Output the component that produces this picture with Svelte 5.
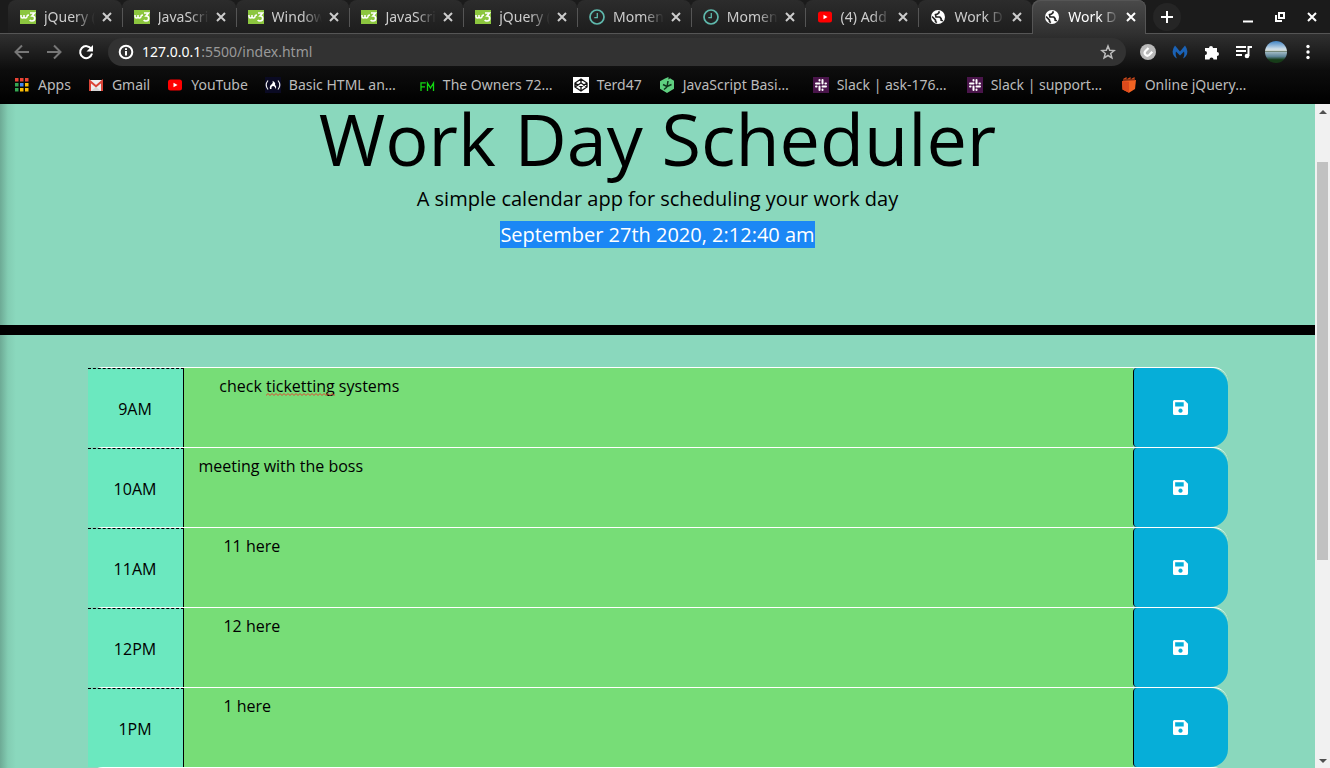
<script>
  const tabs = [
    { icon: 'w3', title: 'jQuery (' },
    { icon: 'w3', title: 'JavaScri' },
    { icon: 'w3', title: 'Window' },
    { icon: 'w3', title: 'JavaScri' },
    { icon: 'w3', title: 'jQuery (' },
    { icon: 'clock', title: 'Momen' },
    { icon: 'clock', title: 'Momen' },
    { icon: 'youtube', title: '(4) Add' },
    { icon: 'globe', title: 'Work D' },
    { icon: 'globe', title: 'Work D', active: true }
  ];
  const bookmarks = [
    { icon: 'apps', title: 'Apps' },
    { icon: 'gmail', title: 'Gmail' },
    { icon: 'youtube', title: 'YouTube' },
    { icon: 'fcc', title: 'Basic HTML an…', long: true },
    { icon: 'fm', title: 'The Owners 72…', long: true },
    { icon: 'codepen', title: 'Terd47' },
    { icon: 'treehouse', title: 'JavaScript Basi…', long: true },
    { icon: 'slack', title: 'Slack | ask-176…', long: true },
    { icon: 'slack', title: 'Slack | support…', long: true },
    { icon: 'box', title: 'Online jQuery…', long: true }
  ];
  let slots = $state([
    { hour: '9AM', text: '     check ticketting systems', typo: { left: 82, width: 69 } },
    { hour: '10AM', text: 'meeting with the boss' },
    { hour: '11AM', text: '      11 here' },
    { hour: '12PM', text: '      12 here' },
    { hour: '1PM', text: '      1 here' }
  ]);
</script>

{#snippet icon(name)}
  <svg class="icon" viewBox="0 0 16 16" aria-hidden="true">
    {#if name === 'w3'}
      <rect y="1" width="16" height="14" fill="#8cc63f" />
      <path d="M1 6v1.500a1.500 1.500 0 0 0 3 0V6v1.500a1.500 1.500 0 0 0 3 0q0-1.500 2-1.500" fill="none" stroke="#fff" stroke-width="1.500" />
      <path d="M10 4h4.500L12 7q2.700 0 2.700 2.300Q14.700 12 12 12q-1.600 0-2.300-1" fill="none" stroke="#fff" stroke-width="1.700" />
    {:else if name === 'clock'}
      <circle cx="8" cy="8" r="7" fill="none" stroke="#5fb8ac" stroke-width="1.700" />
      <path d="M8.300 4v4.600H5.300" fill="none" stroke="#5fb8ac" stroke-width="1.300" />
    {:else if name === 'youtube'}
      <rect x="1" y="2.500" width="14" height="11" rx="2.500" fill="#f00" />
      <path d="M6.500 5.700v4.600l4-2.300z" fill="#fff" />
    {:else if name === 'globe'}
      <circle cx="8" cy="8" r="7" fill="#fff" />
      <path d="M2 7.500l3.500 3.700v1.300l1.300 1.200M9 2.300v1.300L7.500 5l-2 .6.5 2.400h3.800l1.300 1.600v1.600l1.800.6" fill="none" stroke="#242424" stroke-width="1.700" />
    {:else if name === 'apps'}
      {#each ['#ea4335', '#ea4335', '#ea4335', '#34a853', '#4285f4', '#fbbc05', '#34a853', '#fbbc05', '#fbbc05'] as colour, i}
        <rect x={1 + (i % 3) * 5} y={1 + Math.floor(i / 3) * 5} width="3.500" height="3.500" fill={colour} />
      {/each}
    {:else if name === 'gmail'}
      <rect x="1" y="3" width="14" height="11" rx="1" fill="#eee" />
      <path d="M3 14l5-4 5 4z" fill="#d5d5d5" />
      <path d="M2 14V4.200l6 5 6-5V14" fill="none" stroke="#db4437" stroke-width="2" />
    {:else if name === 'fcc'}
      <rect width="16" height="16" fill="#0a0a23" />
      <path d="M3 3.500q-3.600 4.500 0 9M13 3.500q3.600 4.500 0 9" fill="none" stroke="#eee" stroke-width="1.200" />
      <path d="M5 12q-1-3 2-5 1.300-1.200.6-3.300Q11 5.500 10 8q1.800 1 .8 4-1-3-2.500-3Q6 9 6.500 12z" fill="#fff" />
    {:else if name === 'fm'}
      <path d="M2 14V5.800h4.800M2 9.800h4M8.500 14V6l3 5 3-5v8" fill="none" stroke="#12d812" stroke-width="1.300" />
    {:else if name === 'codepen'}
      <rect width="16" height="16" fill="#fff" />
      <path d="M8 2l6 4v4l-6 4-6-4V6zM8 2v4M8 10v4M2 6l6 4 6-4M2 10l6-4 6 4" fill="none" stroke="#111" stroke-width="1.300" />
    {:else if name === 'treehouse'}
      <path d="M9.500 0v2.500L11 1.200l4 2.600v8L8 16l-7-4.200V4.200L6 1.500z" fill="#5fcf80" />
      <path d="M8 9.500L4 7.500M8 10l1-6M8 9.500l4.500-2M8 10l-3 2.500" fill="none" stroke="#10351c" stroke-width="1.500" />
    {:else if name === 'slack'}
      <rect width="16" height="16" fill="#4a154b" />
      <path d="M3 6.500h3.500M9.500 3v3.500M9.500 9.500H13M6.500 9.500V13M6.500 3v.6M13 6.500h-.6M9.500 13v-.6M3 9.500h.6" fill="none" stroke="#fff" stroke-width="2" stroke-linecap="round" />
    {:else if name === 'box'}
      <path d="M1 4l14-1-1 9-6 3.700-6.500-3.200z" fill="#f26322" />
      <path d="M1 4l7 .7V15.700L1.500 12.500z" fill="#dd4a1c" />
      <path d="M3 4V2l2-1v3M7 4V2l2-1v3M11 4V2l2-1v3" fill="none" stroke="#d24a1b" stroke-width="1.200" />
    {/if}
  </svg>
{/snippet}

<div class="window">
  <header class="chrome">
    <div class="strip">
      <div class="tabs">
        {#each tabs as tab}
          <div class="tab" class:active={tab.active}>
            {@render icon(tab.icon)}
            <span class="tab-title">{tab.title}</span>
            <button class="close" aria-label="Close tab"><svg viewBox="0 0 10 10"><path d="M1 1l8 8M9 1L1 9" /></svg></button>
          </div>
        {/each}
      </div>
      <button class="new-tab" aria-label="New tab"><svg viewBox="0 0 12 12"><path d="M6 0v12M0 6h12" /></svg></button>
      <div class="controls">
        <button aria-label="Minimise"><svg viewBox="0 0 12 12"><path d="M1 10.500h10" /></svg></button>
        <button aria-label="Restore"><svg viewBox="0 0 12 12"><path d="M5 2h5v5H5zM2 4v6h6" /></svg></button>
        <button aria-label="Close"><svg viewBox="0 0 12 12"><path d="M2 2l8 8M10 2l-8 8" /></svg></button>
      </div>
    </div>

    <div class="toolbar">
      <button class="tool dim" aria-label="Back"><svg viewBox="0 0 16 16"><path d="M15 8H2M8 1.500L1.500 8 8 14.500" /></svg></button>
      <button class="tool dim" aria-label="Forward"><svg viewBox="0 0 16 16"><path d="M1 8h13M8 1.500L14.500 8 8 14.500" /></svg></button>
      <button class="tool" aria-label="Reload"><svg viewBox="0 0 16 16"><path d="M13.300 5A6 6 0 1 0 14 9.500" /><path d="M15 1v6.500H8.500z" class="solid" /></svg></button>
      <div class="address">
        <svg class="info" viewBox="0 0 16 16"><circle cx="8" cy="8" r="6.300" /><path d="M8 7v4.500M8 4.300v1.600" /></svg>
        <span class="url"><b>127.0.0.1</b>:5500/index.html</span>
        <button class="star" aria-label="Bookmark this page"><svg viewBox="0 0 16 16"><path d="M8 2l1.700 4.300 4.500.3-3.500 2.900 1.200 4.400L8 11.500l-3.900 2.400 1.200-4.400-3.500-2.900 4.500-.3z" /></svg></button>
      </div>
      <div class="extensions">
        <button class="tool" aria-label="Attachments"><svg viewBox="0 0 16 16"><circle cx="8" cy="8" r="8" fill="#b9b9b9" stroke="none" /><path d="M8.500 4L5.300 7.200a2.700 2.700 0 0 0 3.800 3.800L12.300 7.800" stroke="#fff" stroke-width="2.200" /></svg></button>
        <button class="tool" aria-label="Malware protection"><svg viewBox="0 0 16 16"><path d="M3 1.500L8 7.500l5-6q4 5 1.300 10-1 2-3.300 3 2-3 1-7L8 11.500 4 7.500q-1 4 1 7-2.300-1-3.300-3Q-1 6.500 3 1.500z" fill="#1b62b5" stroke="none" /></svg></button>
        <button class="tool" aria-label="Extensions"><svg viewBox="0 0 16 16"><path d="M1 4h4a2 2 0 1 1 4 0h4v4a2 2 0 1 1 0 4v3.500H9.500a2 2 0 1 0-4 0H1V11a2 2 0 1 0 0-4z" class="fill" /></svg></button>
        <button class="tool" aria-label="Media"><svg viewBox="0 0 16 16"><path d="M0 3h10M0 7h10M0 11h6M12.500 12V3H16" /><circle cx="11" cy="12" r="2.300" class="fill" /></svg></button>
        <button class="avatar" aria-label="Profile"></button>
        <button class="tool menu" aria-label="Menu"><svg viewBox="0 0 16 16"><circle cx="8" cy="2.500" r="1.700" class="fill" /><circle cx="8" cy="8" r="1.700" class="fill" /><circle cx="8" cy="13.500" r="1.700" class="fill" /></svg></button>
      </div>
    </div>

    <nav class="bookmarks">
      {#each bookmarks as mark}
        <a href="#top" class:long={mark.long}>{@render icon(mark.icon)}{mark.title}</a>
      {/each}
    </nav>
  </header>

  <div class="viewport">
    <main>
      <section class="hero">
        <h1>Work Day Scheduler</h1>
        <p>A simple calendar app for scheduling your work day</p>
        <p><mark>September 27th 2020, 2:12:40 am</mark></p>
      </section>
      <section class="planner">
        {#each slots as slot, i}
          <div class="row">
            <label class="hour" for={`slot-${i}`}>{slot.hour}</label>
            <div class="note">
              <textarea id={`slot-${i}`} spellcheck="false" bind:value={slot.text}></textarea>
              {#if slot.typo}
                <svg class="squiggle" aria-hidden="true" style:left={`${slot.typo.left}px`} style:width={`${slot.typo.width}px`}>
                  <defs>
                    <pattern id="wave" width="4" height="3" patternUnits="userSpaceOnUse"><path d="M-1 1.500L0 2.500 2 .5 4 2.500 5 1.500" /></pattern>
                  </defs>
                  <rect width="100%" height="3" fill="url(#wave)" stroke="none" />
                </svg>
              {/if}
            </div>
            <button class="save" aria-label={`Save ${slot.hour}`}>
              <svg viewBox="0 0 14 14"><path fill-rule="evenodd" d="M1.500 0h9L14 3.500v9q0 1.500-1.500 1.500h-11Q0 14 0 12.500v-11Q0 0 1.500 0zM2 2v4h8V2zM7 8a2 2 0 1 0 .01 0z" /></svg>
            </button>
          </div>
        {/each}
        <div class="row"></div>
      </section>
    </main>
    <div class="scroll" aria-hidden="true">
      <i class="up"></i>
      <div class="thumb"></div>
      <i class="down"></i>
    </div>
  </div>
</div>

<style>
  :global(body) { margin: 0; background: #8ad8bd; }
  .window { height: 100vh; display: flex; flex-direction: column; overflow: hidden; font-family: 'Open Sans', sans-serif; }
  button { border: 0; padding: 0; margin: 0; background: none; color: inherit; font: inherit; display: grid; place-items: center; flex: none; }
  svg { display: block; flex: none; fill: none; stroke: currentColor; stroke-width: 2; }
  .fill { fill: currentColor; stroke: none; }
  .solid { fill: currentColor; stroke: none; }
  .icon { width: 16px; height: 16px; stroke: none; }

  .chrome { background: #000; color: #fff; font: 14px/20px 'Noto Sans', sans-serif; flex: none; }
  .strip { height: 33px; display: flex; align-items: center; background: #1b1b1b; padding: 0 8px; border-bottom: 1px solid #555; }
  .tabs { flex: 0 1 1138px; align-self: stretch; display: grid; grid-template-columns: repeat(10, minmax(0, 1fr)); }
  .tab { height: 33px; box-sizing: border-box; display: flex; align-items: center; gap: 8px; padding: 0 7px 0 12px; border-radius: 8px 8px 0 0; background: linear-gradient(#2c2c2c, #1d1d1d); color: #ccc; position: relative; }
  .tab + .tab::before { content: ''; position: absolute; left: 0; top: 8px; height: 19px; width: 1px; background: #555; }
  .tab.active { height: 34px; background: linear-gradient(#4a4a4a, #303030); color: #fff; box-shadow: inset 1px 1px #555, inset -1px 0 #555; }
  .tab.active::before { display: none; }
  .tab-title { flex: 1; min-width: 0; margin-right: -5px; overflow: hidden; white-space: nowrap; mask-image: linear-gradient(90deg, #000 60%, transparent 98%); }
  .close { width: 16px; height: 16px; }
  .close svg { width: 10px; height: 10px; stroke-width: 2; }
  .new-tab { width: 28px; height: 28px; border-radius: 50%; background: #252525; margin-left: 7px; }
  .new-tab svg { width: 12px; height: 12px; }
  .controls { margin-left: auto; display: flex; gap: 20px; padding-right: 4px; }
  .controls svg { width: 12px; height: 12px; }

  .toolbar { height: 36px; display: flex; align-items: center; gap: 16px; padding: 0 14px; background: linear-gradient(#303030, #0d0d0d); }
  .tool svg { width: 16px; height: 16px; }
  .dim { color: #777; }
  .address { flex: 1; height: 28px; display: flex; align-items: center; gap: 8px; padding: 0 10px; margin-left: -2px; border-radius: 14px; background: #323232; }
  .info { width: 16px; height: 16px; stroke-width: 2; }
  .url { flex: 1; color: #999; }
  .url b { font-weight: 400; color: #fff; }
  .star svg { width: 16px; height: 16px; stroke: #bbb; stroke-width: 1.5; }
  .extensions { display: flex; align-items: center; gap: 16px; margin-left: -2px; }
  .avatar { width: 22px; height: 22px; border-radius: 50%; background: linear-gradient(#3f83c4, #c9dbe6 35%, #d7e0df 43%, #5f6d50 45%, #9ab4bf 52%, #5f8598 70%, #163c18 85%); margin: 0 -3px; }

  .bookmarks { height: 34px; display: flex; align-items: center; gap: 17px; padding: 0 14px 4px; box-sizing: border-box; color: #bbb; background: linear-gradient(#0d0d0d, #000); }
  .bookmarks a { display: flex; align-items: center; gap: 8px; color: inherit; text-decoration: none; white-space: nowrap; }
  .bookmarks .long { flex: 0 1 137px; }

  .viewport { flex: 1; min-height: 0; display: flex; background: #8ad8bd; }
  main { flex: 1; min-width: 0; overflow: hidden; color: #000; background: linear-gradient(90deg, #6daa95, #83cdb3 8px, transparent 16px); }
  .hero { height: 221px; border-bottom: 10px solid #000; text-align: center; }
  h1 { margin: 0; padding-bottom: 12px; font-size: 72px; line-height: 68px; font-weight: 400; }
  p { margin: 0 0 6px; font-size: 20px; line-height: 30px; }
  mark { background: #1b87f5; color: #fff; }
  .planner { max-width: 1140px; margin: 32px auto 0; }
  .row { display: grid; grid-template-columns: 96px 1fr 95px; height: 80px; box-sizing: border-box; border-top: 1px solid #fff; border-radius: 15px; font-size: 16px; line-height: 24px; }
  .hour { background: #6be8bf; border-top: 1px dashed #000; border-right: 1px solid #000; display: grid; place-items: center; padding-top: 2px; }
  .note { position: relative; display: grid; }
  textarea { display: block; margin: 0; border: 0; outline: 0; resize: none; overflow: hidden; border-radius: 0; background: #77dd77; color: #000; padding: 6px 15px; font: inherit; }
  .squiggle { position: absolute; top: 25px; height: 3px; }
  .squiggle path { stroke: #e2432e; stroke-width: 1; }
  .save { width: 100%; box-sizing: border-box; background: #06aed8; color: #fff; border-left: 1px solid #000; border-radius: 4px 18px 18px 4px; }
  .save svg { width: 15px; height: 15px; fill: currentColor; stroke: none; }

  .scroll { width: 15px; background: #f1f1f1; display: flex; flex-direction: column; align-items: center; }
  .scroll i { border: 4px solid transparent; }
  .scroll .up { border-bottom-color: #505050; margin-top: 2px; }
  .scroll .down { border-top-color: #505050; margin: auto 0 1px; }
  .thumb { width: 11px; height: 60%; margin-top: 48px; background: #c1c1c1; }
</style>
